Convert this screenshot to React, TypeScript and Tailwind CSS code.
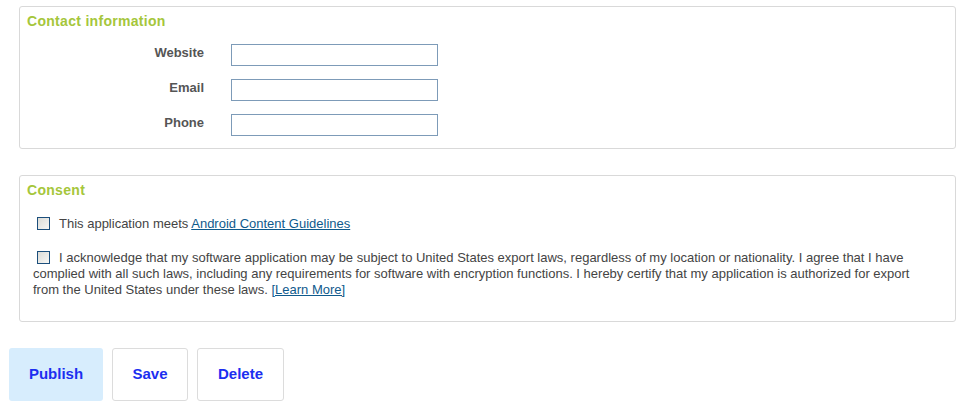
import React from "react";

const font = { fontFamily: '"Liberation Sans", Arial, sans-serif' };

function Field({ label }: { label: string }) {
  return (
    <div className="flex items-start h-[22px]">
      <span className="w-[184px] pt-[1px] text-right text-[13px] leading-[16px] font-bold text-[#555555]">{label}</span>
      <input className="ml-[27px] w-[207px] h-[22px] border border-[#7d9bb8] bg-white outline-none" />
    </div>
  );
}

function Box({ title, children, className }: { title: string; children: React.ReactNode; className?: string }) {
  return (
    <section className={`mx-[19px] w-[937px] rounded-[3px] border border-[#d9d9d9] bg-white ${className ?? ""}`}>
      <h2 className="pl-[7px] pt-[6px] text-[14px] leading-[16px] tracking-[0.3px] font-bold text-[#a5c63b]">{title}</h2>
      {children}
    </section>
  );
}

function Check() {
  return (
    <span className="inline-block align-[-2px] w-[13px] h-[13px] border border-[#1c4f7c] bg-gradient-to-br from-[#dcdcd7] to-[#f7f7f5]" />
  );
}

export default function App() {
  return (
    <div className="bg-white w-[976px] h-[413px] pt-[6px] text-[#444444]" style={font}>
      <Box title="Contact information" className="h-[143px]">
        <div className="flex flex-col gap-[13px] mt-[15px]">
          <Field label="Website" />
          <Field label="Email" />
          <Field label="Phone" />
        </div>
      </Box>

      <Box title="Consent" className="mt-[26px] h-[147px]">
        <div className="pl-[13px] pr-[33px] text-[13px] leading-[16px]">
          <p className="mt-[18px] pl-[4px]">
            <Check />
            <span className="ml-[9px]">This application meets </span>
            <a href="#" className="text-[#0f5a8c] underline">Android Content Guidelines</a>
          </p>
          <p className="mt-[18px]">
            <span className="ml-[4px]"><Check /></span>
            <span className="ml-[9px]">
              I acknowledge that my software application may be subject to United States export laws, regardless of my location or nationality. I agree that I have complied with all such laws, including any requirements for software with encryption functions. I hereby certify that my application is authorized for export from the United States under these laws.{" "}
              <a href="#" className="text-[#0f5a8c] underline">[Learn More]</a>
            </span>
          </p>
        </div>
      </Box>

      <div className="flex ml-[9px] mt-[26px]">
        <button className="w-[94px] h-[53px] rounded-[3px] bg-[#d7edfd] text-[15px] font-bold text-[#1c2ff0]">Publish</button>
        <button className="ml-[9px] w-[76px] h-[53px] rounded-[3px] border border-[#dcdcdc] bg-white text-[15px] font-bold text-[#1c2ff0]">Save</button>
        <button className="ml-[9px] w-[87px] h-[53px] rounded-[3px] border border-[#dcdcdc] bg-white text-[15px] font-bold text-[#1c2ff0]">Delete</button>
      </div>
    </div>
  );
}
